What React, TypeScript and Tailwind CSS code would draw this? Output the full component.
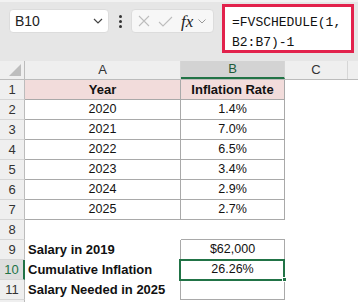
import React from 'react';

const font = { fontFamily: '"Liberation Sans", Arial, sans-serif' };

type Row = { n: number; a?: string; b?: string; head?: boolean };

const rows: Row[] = [
  { n: 1, a: 'Year', b: 'Inflation Rate', head: true },
  { n: 2, a: '2020', b: '1.4%' },
  { n: 3, a: '2021', b: '7.0%' },
  { n: 4, a: '2022', b: '6.5%' },
  { n: 5, a: '2023', b: '3.4%' },
  { n: 6, a: '2024', b: '2.9%' },
  { n: 7, a: '2025', b: '2.7%' },
];

const RowHead = ({ n, active }: { n: number; active?: boolean }) => (
  <div
    className={`flex h-full w-[25px] shrink-0 items-center justify-center border-b border-[#d6d6d6] text-[13px] ${
      active
        ? 'border-r-2 border-r-[#217346] bg-[#dedede] text-[#217346]'
        : 'border-r border-r-[#bcbcbc] bg-[#efefef] text-[#333]'
    }`}
  >
    {n}
  </div>
);

export default function App() {
  return (
    <div className="h-[302px] w-[358px] overflow-hidden bg-white text-[#111]" style={font}>
      {/* toolbar */}
      <div className="flex h-[61px] items-start border-t-2 border-[#f2f2f2] bg-[#e6e6e6] pl-[9px]">
        <div className="mt-[7px] flex h-[24px] w-[100px] items-center justify-between rounded-[4px] border border-[#dcdcdc] bg-white pl-[5px] pr-[5px]">
          <span className="text-[14px] text-[#222]">B10</span>
          <svg width="10" height="6" viewBox="0 0 10 6" fill="none" stroke="#444" strokeWidth="1.2">
            <path d="M1 1l4 4 4-4" />
          </svg>
        </div>
        <div className="mt-[7px] flex h-[24px] w-[22px] flex-col items-center justify-center gap-[2px]">
          <span className="h-[3px] w-[3px] rounded-full bg-[#333]" />
          <span className="h-[3px] w-[3px] rounded-full bg-[#333]" />
          <span className="h-[3px] w-[3px] rounded-full bg-[#333]" />
        </div>
        <div className="mt-[7px] flex h-[24px] w-[83px] items-center rounded-[4px] border border-[#dcdcdc] bg-[#f7f7f7] pl-[6px]">
          <svg width="12" height="12" viewBox="0 0 12 12" fill="none" stroke="#bdbdbd" strokeWidth="1.1">
            <path d="M1 1l10 10M11 1L1 11" />
          </svg>
          <svg className="ml-[8px]" width="15" height="11" viewBox="0 0 15 11" fill="none" stroke="#bdbdbd" strokeWidth="1.1">
            <path d="M1 6l4 4 9-9" />
          </svg>
          <span
            className="ml-[8px] text-[17px] leading-none italic text-[#222]"
            style={{ fontFamily: '"Liberation Serif", serif' }}
          >
            fx
          </span>
          <svg className="ml-[5px]" width="8" height="5" viewBox="0 0 8 5" fill="none" stroke="#999" strokeWidth="1">
            <path d="M0.5 0.5l3.5 3.5 3.5-3.5" />
          </svg>
        </div>
        <div
          className="ml-[8px] mt-[2px] h-[49px] w-[132px] border-[3px] border-[#e2224c] bg-white pl-[7px] pt-[6px] text-[13px] leading-[20px] text-[#111]"
          style={{ fontFamily: '"Liberation Mono", monospace' }}
        >
          =FVSCHEDULE(1,
          <br />
          B2:B7)-1
        </div>
      </div>

      {/* column headers */}
      <div className="flex h-[19px] border-b border-[#bcbcbc] bg-[#efefef] text-[13px] text-[#333]">
        <div className="relative h-full w-[25px] shrink-0 border-r border-[#bcbcbc]">
          <div className="absolute bottom-[3px] right-[3px] h-0 w-0 border-b-[12px] border-l-[12px] border-b-[#bdbdbd] border-l-transparent" />
        </div>
        <div className="flex w-[156px] items-center justify-center border-r border-[#d6d6d6]">A</div>
        <div className="flex w-[104px] items-center justify-center border-b-2 border-r border-b-[#217346] border-r-[#d6d6d6] bg-[#d3d3d3] text-[#1d5c3a]">
          B
        </div>
        <div className="flex w-[63px] items-center justify-center border-r border-[#d6d6d6]">C</div>
        <div className="flex-1" />
      </div>

      {/* data rows */}
      {rows.map((r) => (
        <div key={r.n} className="flex h-[20px]">
          <RowHead n={r.n} />
          <div
            className={`flex w-[156px] items-center justify-center border-b border-r border-[#a9a9a9] ${
              r.head ? 'bg-[#f2dcdb] text-[13px] font-bold' : 'text-[12.5px]'
            }`}
          >
            {r.a}
          </div>
          <div
            className={`flex w-[104px] items-center justify-center border-b border-r border-[#a9a9a9] ${
              r.head ? 'bg-[#f2dcdb] text-[13px] font-bold' : 'text-[12.5px]'
            }`}
          >
            {r.b}
          </div>
        </div>
      ))}

      <div className="flex h-[20px]">
        <RowHead n={8} />
        <div className="w-[156px]" />
        <div className="w-[104px] border-b border-[#a9a9a9]" />
      </div>

      <div className="flex h-[20px]">
        <RowHead n={9} />
        <div className="flex w-[156px] items-center border-r border-[#a9a9a9] pl-[3px] text-[13px] font-bold">Salary in 2019</div>
        <div className="flex w-[104px] items-center justify-center border-b border-r border-[#a9a9a9] text-[12.5px]">$62,000</div>
      </div>

      <div className="flex h-[20px]">
        <RowHead n={10} active />
        <div className="flex w-[156px] items-center border-r border-[#a9a9a9] pl-[3px] text-[13px] font-bold">Cumulative Inflation</div>
        <div className="relative flex w-[104px] items-center justify-center border-b border-r border-[#a9a9a9] text-[12.5px]">
          26.26%
          <div className="absolute -left-[2px] -top-[1px] h-[22px] w-[106px] border-2 border-[#217346]" />
          <div className="absolute -bottom-[3px] -right-[3px] h-[5px] w-[5px] border border-white bg-[#217346]" />
        </div>
      </div>

      <div className="flex h-[20px]">
        <RowHead n={11} />
        <div className="flex w-[156px] items-center border-r border-[#a9a9a9] pl-[3px] text-[13px] font-bold">Salary Needed in 2025</div>
        <div className="w-[104px] border-b border-r border-[#a9a9a9]" />
      </div>

      <div className="flex h-[2px]">
        <div className="w-[25px] border-r border-[#bcbcbc] bg-[#efefef]" />
      </div>
    </div>
  );
}
